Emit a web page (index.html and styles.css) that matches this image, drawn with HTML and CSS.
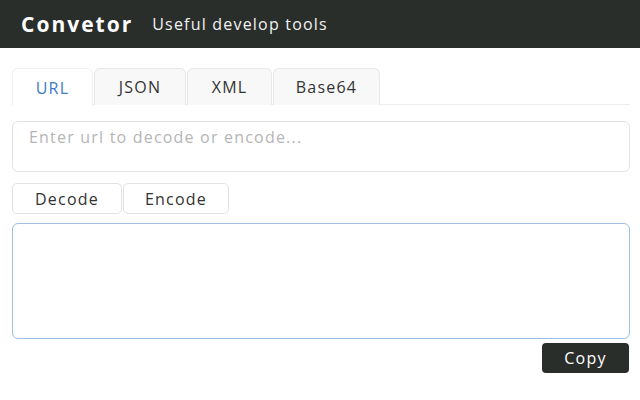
FILE: index.html
```html
<!DOCTYPE html>
<html>
<head>
<meta charset="utf-8">
<link rel="stylesheet" href="styles.css">
</head>
<body>
<header class="header">
  <span class="brand">Convetor</span>
  <span class="tagline">Useful develop tools</span>
</header>
<main class="main">
  <nav class="tabs">
    <div class="tab active">URL</div>
    <div class="tab">JSON</div>
    <div class="tab">XML</div>
    <div class="tab">Base64</div>
  </nav>
  <textarea class="input" placeholder="Enter url to decode or encode..."></textarea>
  <div class="actions">
    <button class="btn">Decode</button>
    <button class="btn">Encode</button>
  </div>
  <textarea class="output"></textarea>
  <div class="copy-row">
    <button class="copy">Copy</button>
  </div>
</main>
</body>
</html>
```

FILE: styles.css
```css
* { box-sizing: border-box; }
html, body { margin: 0; padding: 0; background: #fff; }
body { font-family: "Open Sans", "Noto Sans", sans-serif; color: #333; letter-spacing: 1.2px; }

.header {
  height: 48px;
  background: #2a2e2b;
  display: flex;
  align-items: center;
  padding-left: 21px;
  gap: 19px;
}
.brand { color: #fff; font-size: 21px; font-weight: 700; letter-spacing: 2px; }
.tagline { color: #f2f2f2; font-size: 16px; letter-spacing: 1.2px; }

.main { padding: 20px 10px 0 12px; display: flex; flex-direction: column; }

.tabs {
  display: flex;
  height: 37px;
  border-bottom: 1px solid #eeeeee;
}
.tab {
  height: 37px;
  border: 1px solid #e8e8e8;
  border-bottom: none;
  border-radius: 6px 6px 0 0;
  background: #f8f8f8;
  font-size: 16px;
  color: #333;
  display: flex;
  align-items: center;
  justify-content: center;
  margin-right: 1px;
}
.tab.active { background: #fff; color: #3b7bc8; border-color: #f0f0f0; height: 38px; }
.tab:nth-child(1) { width: 81px; }
.tab:nth-child(2) { width: 92px; }
.tab:nth-child(3) { width: 85px; }
.tab:nth-child(4) { width: 107px; }

.input {
  margin-top: 16px;
  height: 51px;
  border: 1px solid #e3e3e3;
  border-radius: 6px;
  padding: 4px 16px;
  font-family: inherit;
  font-size: 16px;
  letter-spacing: 1.2px;
  resize: none;
  outline: none;
}
.input::placeholder { color: #b5b5b5; }

.actions { display: flex; gap: 1px; margin-top: 11px; }
.btn {
  height: 31px;
  background: #fff;
  border: 1px solid #e3e3e3;
  border-radius: 5px;
  font-family: inherit;
  font-size: 16px;
  letter-spacing: 1.2px;
  color: #333;
  padding: 0;
}
.btn:nth-child(1) { width: 110px; }
.btn:nth-child(2) { width: 106px; }

.output {
  margin-top: 9px;
  height: 116px;
  border: 1px solid #9fc0e0;
  border-radius: 6px;
  resize: none;
  outline: none;
  font-family: inherit;
}

.copy-row { display: flex; justify-content: flex-end; margin-top: 4px; padding-right: 1px; }
.copy {
  width: 87px;
  height: 30px;
  background: #2a2e2b;
  color: #fff;
  border: none;
  border-radius: 4px;
  font-family: inherit;
  font-size: 16px;
  letter-spacing: 1.2px;
  padding: 0;
}
```
